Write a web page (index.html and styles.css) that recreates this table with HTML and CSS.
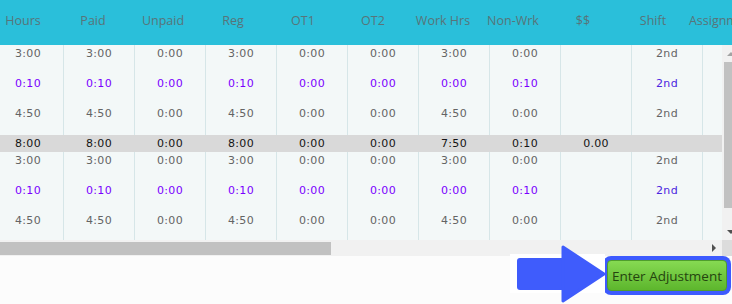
FILE: index.html
```html
<!DOCTYPE html>
<html>
<head>
<meta charset="utf-8">
<link rel="stylesheet" href="styles.css">
</head>
<body>
<div class="grid">
  <div class="head">
    <div class="head-row">
      <div class="hc">Hours</div><div class="hc">Paid</div><div class="hc">Unpaid</div><div class="hc">Reg</div><div class="hc">OT1</div><div class="hc">OT2</div><div class="hc">Work Hrs</div><div class="hc">Non-Wrk</div><div class="hc">$$</div><div class="hc">Shift</div><div class="hc">Assignment</div>
    </div>
  </div>
  <div class="view">
    <div class="rows">
      <div class="row grey"><div class="c">3:00</div><div class="c">3:00</div><div class="c">0:00</div><div class="c">3:00</div><div class="c">0:00</div><div class="c">0:00</div><div class="c">3:00</div><div class="c">0:00</div><div class="c"></div><div class="c">2nd</div><div class="c"></div></div>
      <div class="row purple"><div class="c">0:10</div><div class="c">0:10</div><div class="c">0:00</div><div class="c">0:10</div><div class="c">0:00</div><div class="c">0:00</div><div class="c">0:00</div><div class="c">0:10</div><div class="c"></div><div class="c shift">2nd</div><div class="c"></div></div>
      <div class="row grey"><div class="c">4:50</div><div class="c">4:50</div><div class="c">0:00</div><div class="c">4:50</div><div class="c">0:00</div><div class="c">0:00</div><div class="c">4:50</div><div class="c">0:00</div><div class="c"></div><div class="c">2nd</div><div class="c"></div></div>
      <div class="row total"><div class="c">8:00</div><div class="c">8:00</div><div class="c">0:00</div><div class="c">8:00</div><div class="c">0:00</div><div class="c">0:00</div><div class="c">7:50</div><div class="c">0:10</div><div class="c">0.00</div><div class="c"></div><div class="c"></div></div>
      <div class="row grey"><div class="c">3:00</div><div class="c">3:00</div><div class="c">0:00</div><div class="c">3:00</div><div class="c">0:00</div><div class="c">0:00</div><div class="c">3:00</div><div class="c">0:00</div><div class="c"></div><div class="c">2nd</div><div class="c"></div></div>
      <div class="row purple"><div class="c">0:10</div><div class="c">0:10</div><div class="c">0:00</div><div class="c">0:10</div><div class="c">0:00</div><div class="c">0:00</div><div class="c">0:00</div><div class="c">0:10</div><div class="c"></div><div class="c shift">2nd</div><div class="c"></div></div>
      <div class="row grey"><div class="c">4:50</div><div class="c">4:50</div><div class="c">0:00</div><div class="c">4:50</div><div class="c">0:00</div><div class="c">0:00</div><div class="c">4:50</div><div class="c">0:00</div><div class="c"></div><div class="c">2nd</div><div class="c"></div></div>
    </div>
  </div>
  <div class="vscroll">
    <div class="vbtn"><span class="tri-up"></span></div>
    <div class="vtrack"><div class="vthumb"></div></div>
    <div class="vbtn"><span class="tri-down"></span></div>
  </div>
  <div class="hscroll">
    <div class="htrack"><div class="hthumb"></div></div>
    <div class="hbtn"><span class="tri-right"></span></div>
  </div>
  <div class="corner"></div>
</div>
<div class="footer">
  <div class="btn-ring"><button class="btn">Enter Adjustment</button></div>
</div>
<svg class="pointer" width="100" height="62" viewBox="0 0 100 62">
  <rect x="2" y="10" width="95" height="39" fill="#ffffff"/>
  <rect x="9" y="14" width="56" height="32" rx="3" fill="#3f5cfc"/>
  <polygon points="55,3 96,30 55,57" fill="#3f5cfc" stroke="#3f5cfc" stroke-width="3" stroke-linejoin="round"/>
</svg>
</body>
</html>
```

FILE: styles.css
```css
html, body {
  margin: 0;
  padding: 0;
}
body {
  width: 732px;
  height: 304px;
  overflow: hidden;
  background: #fcfcfc;
  position: relative;
  font-family: "DejaVu Sans", Verdana, sans-serif;
}
.grid {
  display: grid;
  grid-template-columns: 722px 10px;
  grid-template-rows: 45px 195px 16px;
  width: 732px;
}
.head {
  grid-column: 1 / 3;
  background: #2abfda;
  overflow: hidden;
}
.head-row {
  display: flex;
  margin-left: -12px;
}
.hc {
  flex: 0 0 70px;
  text-align: center;
  white-space: nowrap;
  font-family: "Open Sans", sans-serif;
  font-size: 12.5px;
  line-height: 41px;
  color: #587479;
}
.view {
  background: #f3f8f8;
  overflow: hidden;
}
.rows {
  margin-left: -7px;
  width: 781px;
}
.row {
  display: flex;
  height: 30px;
  font-size: 11px;
  line-height: 17px;
  letter-spacing: 0.3px;
}
.c {
  flex: 0 0 71px;
  box-sizing: border-box;
  border-right: 1px solid #d6e6e8;
  text-align: center;
  white-space: nowrap;
}
.grey { color: #646464; }
.purple { color: #7a00ff; }
.purple .shift { color: #4a25e0; }
.total {
  height: 17px;
  background: #d9d9d9;
  color: #141414;
}
.total .c { border-right-color: transparent; }

.vscroll {
  background: #f1f1f1;
  display: flex;
  flex-direction: column;
  overflow: hidden;
}
.vbtn {
  height: 17px;
  width: 17px;
  display: flex;
  align-items: center;
  justify-content: center;
  flex: 0 0 17px;
}
.vtrack {
  flex: 1;
  width: 17px;
}
.vthumb {
  margin-left: 2px;
  width: 13px;
  height: 146px;
  background: #c1c1c1;
}
.tri-up {
  width: 0; height: 0;
  border-left: 4px solid transparent;
  border-right: 4px solid transparent;
  border-bottom: 4px solid #a3a3a3;
}
.tri-down {
  width: 0; height: 0;
  border-left: 4px solid transparent;
  border-right: 4px solid transparent;
  border-top: 4px solid #505050;
}
.hscroll {
  background: #f1f1f1;
  display: flex;
}
.htrack {
  flex: 1;
  padding-top: 2px;
}
.hthumb {
  width: 331px;
  height: 13px;
  background: #c1c1c1;
}
.hbtn {
  flex: 0 0 17px;
  display: flex;
  align-items: center;
  justify-content: center;
}
.tri-right {
  width: 0; height: 0;
  border-top: 4px solid transparent;
  border-bottom: 4px solid transparent;
  border-left: 4px solid #505050;
}
.corner { background: #dcdcdc; }

.footer {
  display: flex;
  justify-content: flex-end;
  padding-right: 1px;
}
.btn-ring {
  width: 128px;
  height: 39px;
  box-sizing: border-box;
  padding: 4px;
  background: #3d5afe;
  border-radius: 8px;
}
.btn {
  width: 100%;
  height: 100%;
  margin: 0;
  padding: 0;
  border: 1px solid #4f9e2c;
  border-radius: 4px;
  background: linear-gradient(#86da52, #5db62d);
  color: #25440f;
  font-family: "Open Sans", sans-serif;
  font-size: 13.5px;
  white-space: nowrap;
}
.pointer {
  position: absolute;
  left: 508px;
  top: 244px;
}
```
